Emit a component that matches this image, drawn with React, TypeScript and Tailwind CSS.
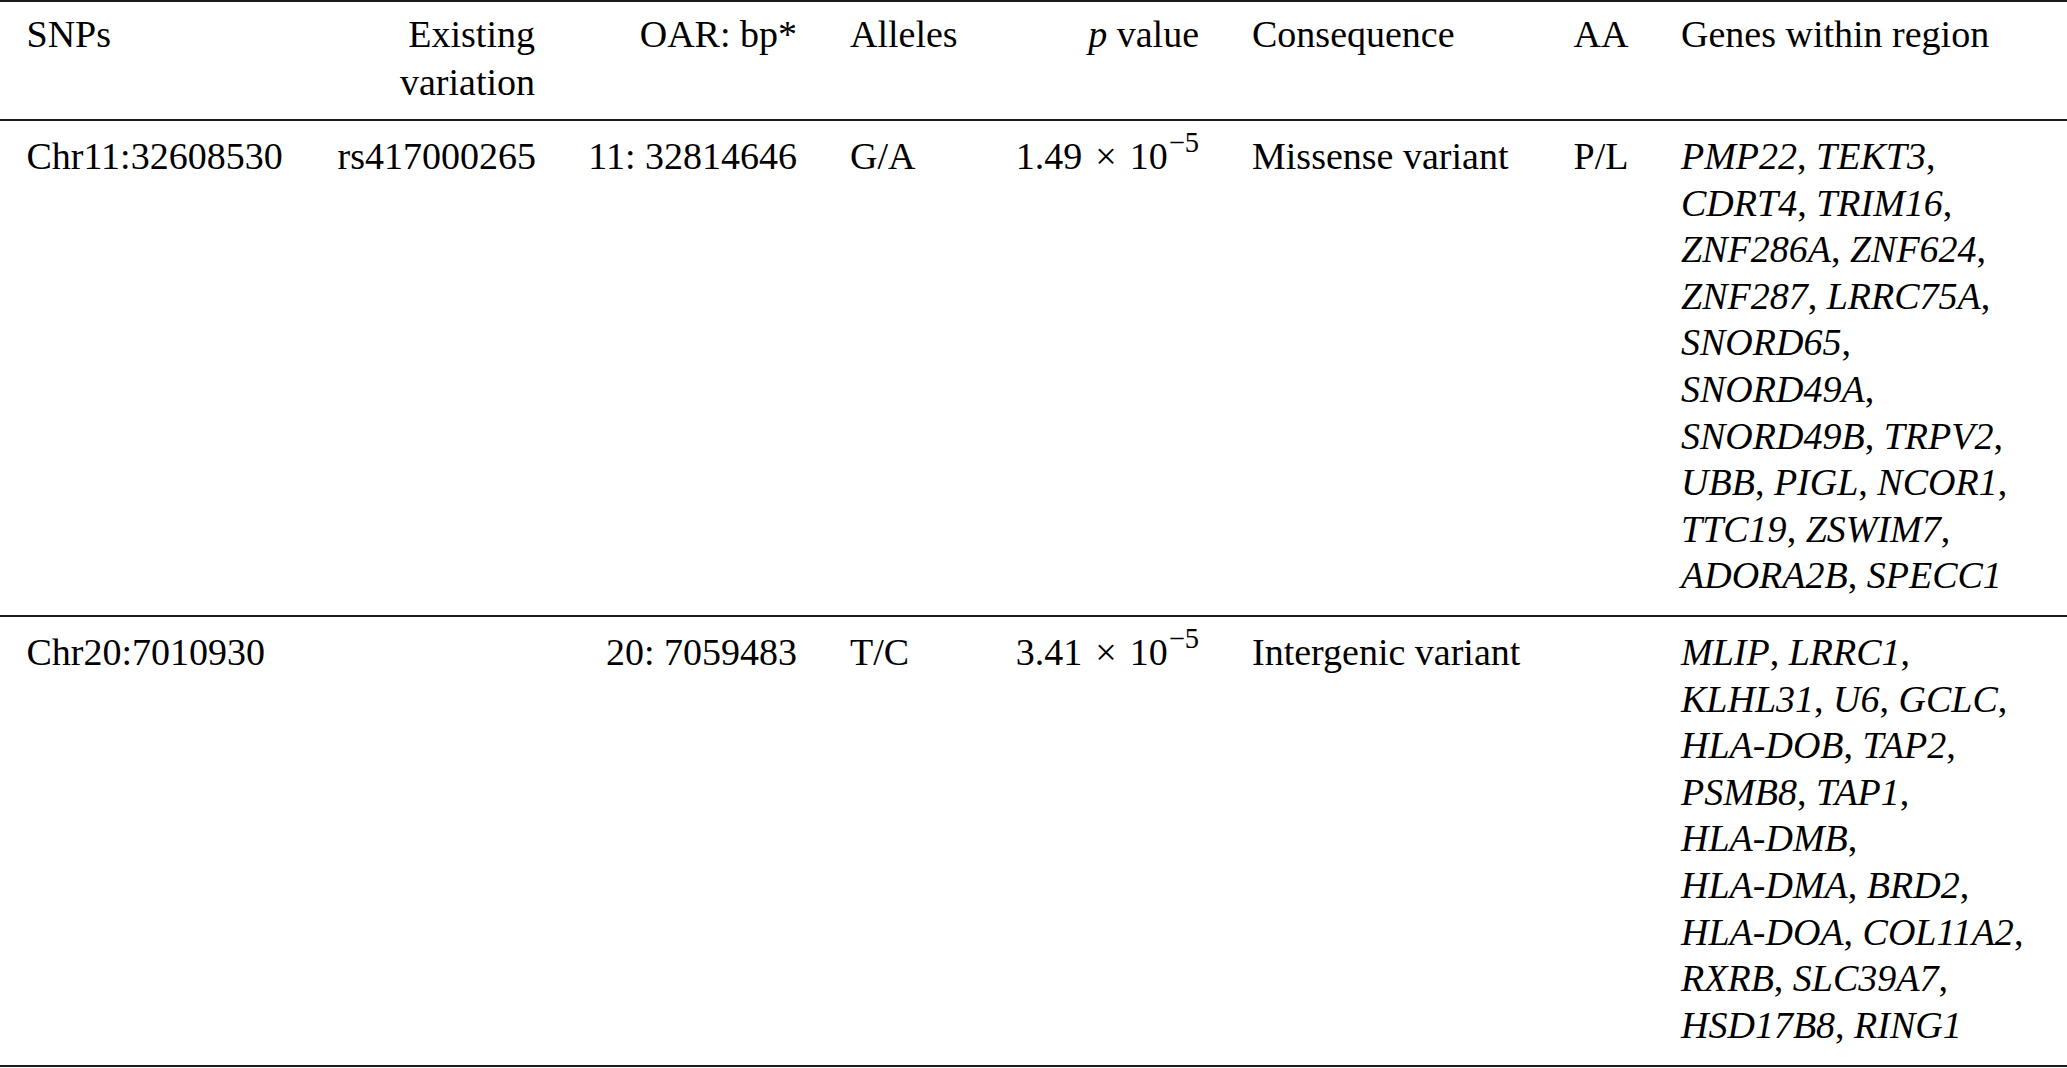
const GRID =
  'grid grid-cols-[311px_250.5px_262px_160.5px_241.5px_321.5px_107.5px_1fr]';

type Row = {
  snp: string;
  rs: string;
  oar: string;
  alleles: string;
  p: string;
  consequence: string;
  aa: string;
  genes: string[][];
};

const ROWS: Row[] = [
  {
    snp: 'Chr11:32608530',
    rs: 'rs417000265',
    oar: '11: 32814646',
    alleles: 'G/A',
    p: '1.49',
    consequence: 'Missense variant',
    aa: 'P/L',
    genes: [
      ['PMP22', 'TEKT3'],
      ['CDRT4', 'TRIM16'],
      ['ZNF286A', 'ZNF624'],
      ['ZNF287', 'LRRC75A'],
      ['SNORD65'],
      ['SNORD49A'],
      ['SNORD49B', 'TRPV2'],
      ['UBB', 'PIGL', 'NCOR1'],
      ['TTC19', 'ZSWIM7'],
      ['ADORA2B', 'SPECC1'],
    ],
  },
  {
    snp: 'Chr20:7010930',
    rs: '',
    oar: '20: 7059483',
    alleles: 'T/C',
    p: '3.41',
    consequence: 'Intergenic variant',
    aa: '',
    genes: [
      ['MLIP', 'LRRC1'],
      ['KLHL31', 'U6', 'GCLC'],
      ['HLA-DOB', 'TAP2'],
      ['PSMB8', 'TAP1'],
      ['HLA-DMB'],
      ['HLA-DMA', 'BRD2'],
      ['HLA-DOA', 'COL11A2'],
      ['RXRB', 'SLC39A7'],
      ['HSD17B8', 'RING1'],
    ],
  },
];

function Genes({ lines }: { lines: string[][] }) {
  return (
    <div>
      {lines.map((line, li) => (
        <div key={li} className="whitespace-nowrap">
          {line.map((g, gi) => {
            const last = li === lines.length - 1 && gi === line.length - 1;
            return (
              <span key={gi}>
                <i>{g}</i>
                {!last && ','}
                {gi < line.length - 1 && ' '}
              </span>
            );
          })}
        </div>
      ))}
    </div>
  );
}

export default function App() {
  return (
    <div className="min-h-screen bg-white text-black font-['Liberation_Serif','Times_New_Roman',serif] text-[38px]">
      {/* header */}
      <div className={`${GRID} border-t-2 border-[#1a1a1a] pt-[8px] pb-[13px] leading-[48px]`}>
        <div className="px-[26.5px]">SNPs</div>
        <div className="px-[26.5px] text-right">
          Existing
          <br />
          variation
        </div>
        <div className="px-[26.5px] text-right whitespace-nowrap">OAR: bp*</div>
        <div className="px-[26.5px]">Alleles</div>
        <div className="px-[26.5px] text-right">
          <i>p</i> value
        </div>
        <div className="px-[26.5px]">Consequence</div>
        <div className="px-[26.5px]">AA</div>
        <div className="px-[26.5px] whitespace-nowrap">Genes within region</div>
      </div>

      {ROWS.map((r, i) => (
        <div
          key={i}
          className={`${GRID} border-t-2 border-[#1a1a1a] pt-[12px] leading-[46.6px] ${
            i === ROWS.length - 1 ? 'pb-[17px] border-b-2' : 'pb-[16px]'
          }`}
        >
          <div className="px-[26.5px] whitespace-nowrap">{r.snp}</div>
          <div className="px-[26.5px] text-right">{r.rs}</div>
          <div className="px-[26.5px] text-right whitespace-nowrap">{r.oar}</div>
          <div className="px-[26.5px]">{r.alleles}</div>
          <div className="px-[26.5px] text-right whitespace-nowrap">
            {r.p}
            <span className="px-[13px]">×</span>
            10<sup className="text-[28.5px] -top-[17px] pl-[1px]">−5</sup>
          </div>
          <div className="px-[26.5px] whitespace-nowrap">{r.consequence}</div>
          <div className="px-[26.5px]">{r.aa}</div>
          <div className="px-[26.5px]">
            <Genes lines={r.genes} />
          </div>
        </div>
      ))}
    </div>
  );
}
